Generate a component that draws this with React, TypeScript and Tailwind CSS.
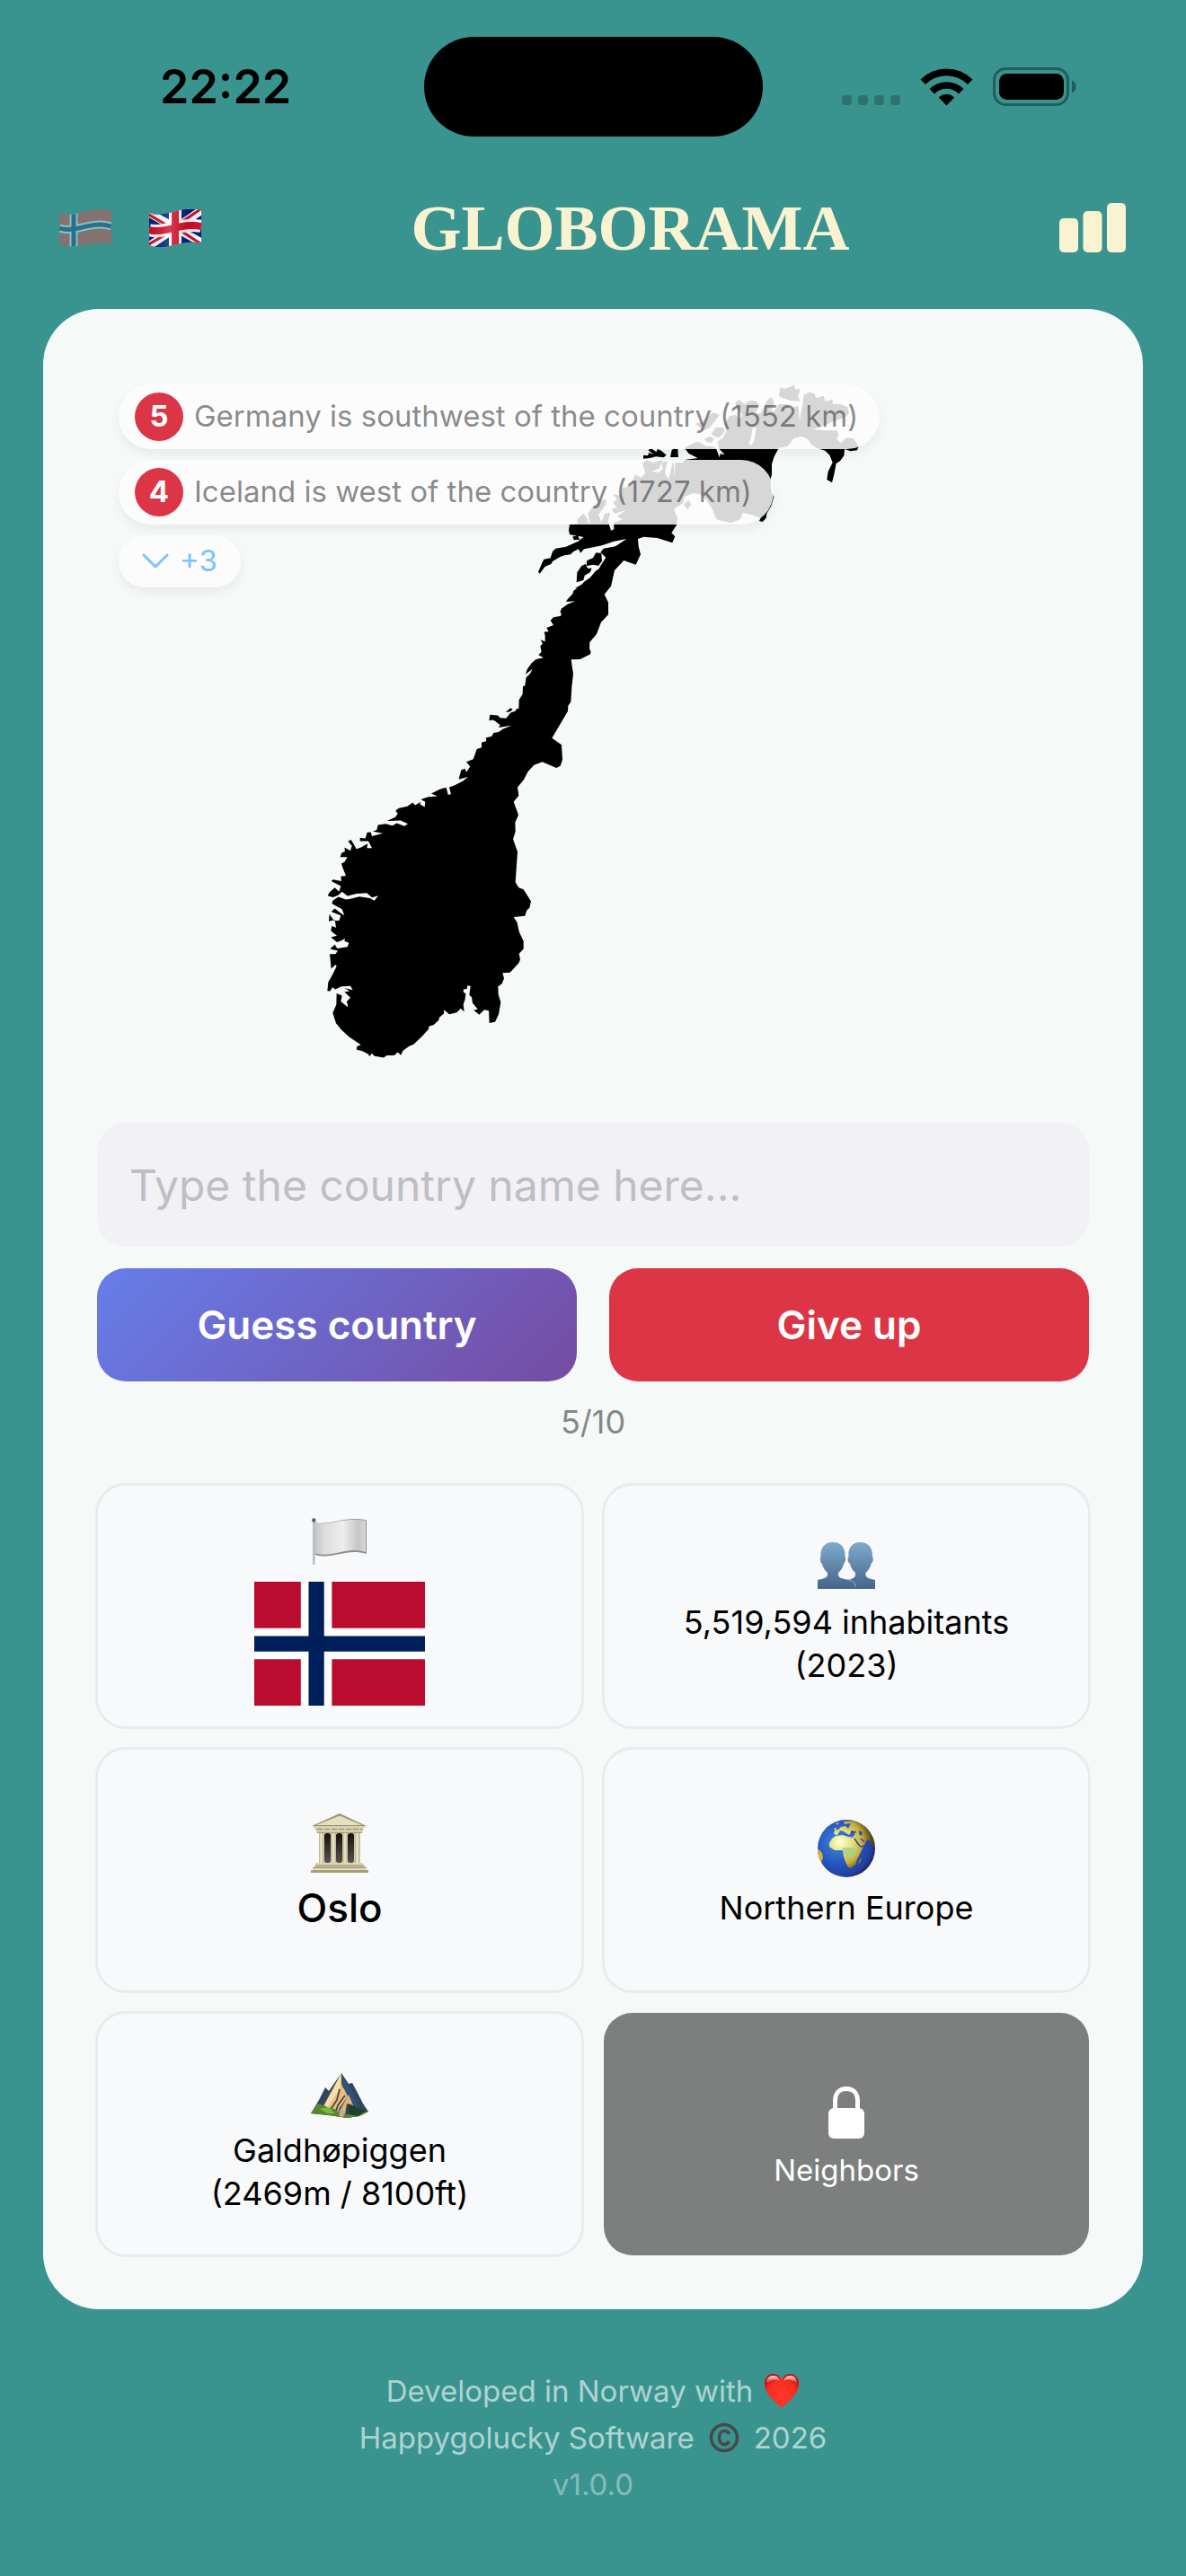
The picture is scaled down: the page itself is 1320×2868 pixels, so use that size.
import React from "react";

function NorwayShape() {
  return (
    <svg viewBox="364 428 592 750" className="mx-auto block h-[750px] w-[592px]" role="img" aria-label="Country outline">
      <g transform="translate(560 400) scale(0.33333)">
        <path d="M190 846 L193 836 215 818 240 808 210 810 216 800 232 784 236 772 250 764 268 760 264 752 272 742 290 730 308 708 320 700 325 690 343 662 325 645 335 632 375 625 412 600 370 608 330 622 290 630 270 634 258 647 252 634 235 642 225 652 205 655 190 660 165 675 160 684 140 692 122 716 117 710 130 680 136 668 158 664 165 642 175 632 210 626 250 608 268 594 250 590 256 602 236 604 232 592 246 590 222 585 219 570 222 552 248 550 247 535 268 515 280 530 285 550 290 545 283 515 300 492 322 470 345 468 342 485 318 520 328 542 340 515 358 512 350 540 360 572 370 568 370 545 400 535 380 525 410 505 372 515 362 500 380 495 366 478 380 470 368 450 390 455 398 430 418 425 432 410 440 385 460 395 475 380 465 350 478 336 500 345 535 336 520 365 495 375 520 378 532 366 530 345 548 340 540 380 552 402 560 370 566 345 570 345 570 400 575 345 600 345 610 335 650 330 620 315 606 297 625 285 650 275 680 290 700 290 712 300 722 328 725 316 740 318 722 300 715 275 735 262 745 240 740 215 755 190 775 185 790 200 800 185 780 165 775 145 790 135 805 150 825 138 845 140 855 155 845 175 830 185 860 180 880 140 895 125 905 145 895 170 905 175 920 150 945 150 960 165 985 155 990 205 1000 150 1003 120 1020 110 1040 115 1045 130 1070 122 1075 140 1100 135 1100 150 1125 150 1150 160 1155 180 1140 195 1110 205 1085 215 1060 225 1035 235 1085 238 1115 238 1120 255 1112 265 1128 280 1145 262 1170 265 1187 290 1182 304 1160 307 1140 300 1138 322 1125 340 1112 348 1105 385 1098 412 1081 402 1085 375 1100 345 1090 320 1075 305 1050 298 1030 285 1015 265 995 257 970 265 950 290 920 297 905 325 897 350 897 385 893 400 895 440 904 460 895 490 880 515 878 530 866 543 855 540 860 530 830 520 800 513 792 535 760 546 712 535 700 505 680 470 655 450 630 448 605 460 600 480 570 500 582 530 580 552 562 580 574 592 565 613 515 597 470 593 450 600 452 625 459 652 443 686 403 672 372 705 360 758 338 785 351 812 351 846Z" />
        <path d="M245 745 247 712 262 690 275 684 282 698 296 698 290 712 272 722 268 738ZM278 690 280 672 300 664 310 646 328 648 330 674 318 690 302 686ZM240 765 262 752 270 745 285 750 292 778 280 770Z" />
        <path d="M921 122 925 93 938 98 950 95 972 86 976 100 992 98 985 125 992 140 960 138 930 128ZM468 332 468 320 482 322 488 312 504 318 484 304 494 298 512 310 515 300 528 305 545 320 536 328 510 325 490 330ZM558 327 563 303 572 298 583 300 585 327ZM640 215 665 210 700 178 722 185 705 210 690 228 665 240 655 225ZM695 250 710 228 735 228 740 240 722 262 705 258ZM672 265 690 258 705 265 695 280 678 275ZM620 470 628 485 615 502 604 485Z" />
        <path fill="#f5f9f8" d="M832 230 846 228 838 270 830 287 820 282 828 262Z" />
      </g>
      <g transform="translate(340 640) scale(0.33333 0.35714)">
        <path d="M1011 85 1011 124 987 148 972 185 949 210 948 230 953 240 950 248 917 263 887 264 890 285 894 308 889 350 886 396 877 408 876 425 823 509 855 530 858 576 851 596 838 602 791 583 763 593 743 613 728 640 708 662 712 688 695 708 711 748 700 772 701 800 693 824 708 863 701 958 712 975 728 981 753 1018 748 1038 739 1046 733 1063 695 1067 707 1084 713 1112 728 1142 728 1166 713 1181 717 1200 712 1210 683 1240 658 1241 663 1258 656 1275 643 1283 644 1308 652 1332 645 1370 633 1394 614 1397 612 1359 597 1356 580 1371 562 1357 575 1354 558 1335 555 1317 547 1310 551 1282 541 1280 539 1291 527 1292 528 1302 535 1305 533 1322 527 1340 530 1362 518 1352 505 1364 480 1370 463 1356 462 1368 447 1380 445 1388 428 1403 412 1408 411 1416 390 1438 362 1463 345 1470 325 1484 319 1497 308 1488 296 1498 272 1498 261 1505 230 1500 222 1492 214 1501 209 1494 190 1485 170 1480 172 1470 185 1465 145 1440 120 1418 102 1398 91 1366 103 1340 104 1305 122 1312 118 1330 142 1348 138 1330 150 1318 130 1300 148 1298 130 1288 158 1294 150 1282 120 1283 100 1292 90 1286 82 1298 73 1297 76 1270 88 1250 104 1220 100 1215 86 1228 81 1182 100 1182 108 1172 82 1166 98 1152 106 1165 140 1160 145 1147 130 1142 132 1133 120 1140 105 1145 85 1130 105 1125 85 1110 88 1095 102 1100 98 1075 78 1080 80 1058 95 1078 112 1078 118 1062 86 1050 98 1040 114 1052 130 1062 122 1042 88 1025 92 1015 110 1004 135 1012 150 1010 180 1003 215 1008 230 1016 243 1000 222 1006 205 992 170 994 140 1001 122 988 110 998 92 1005 74 1000 80 990 98 975 112 988 118 970 86 955 92 950 120 955 118 940 135 938 125 915 120 900 130 895 140 880 116 880 120 868 132 862 130 850 150 860 155 845 142 830 152 826 160 838 170 855 185 850 208 838 205 852 222 852 210 830 182 830 182 820 200 822 206 803 218 802 222 815 258 806 225 800 238 795 242 780 268 776 290 782 305 774 330 783 342 776 318 766 272 767 300 755 308 745 301 735 312 727 340 722 358 710 366 718 385 708 382 715 398 724 400 708 385 700 410 692 440 690 420 682 450 668 470 663 476 685 486 684 480 662 500 655 525 643 542 630 512 638 515 625 520 608 533 604 537 615 550 598 537 583 560 575 565 562 572 543 588 538 588 523 604 518 602 508 622 503 628 493 645 490 660 480 688 470 645 476 650 468 632 455 625 452 613 454 616 436 642 438 650 446 670 447 685 430 700 425 708 415 712 420 713 390 725 372 726 348 733 345 737 320 750 308 758 293 735 310 740 295 755 275 770 263 795 258 778 250 788 240 784 222 792 215 785 202 800 208 800 190 797 178 812 177 805 165 828 157 818 142 828 132 853 128 855 105 868 97 897 87Z" />
        <path d="M668 428 685 415 692 420 682 427Z" />
      </g>
    </svg>
  );
}

function WaveFlagNorway() {
  return (
    <svg viewBox="0 0 58 42" className="block h-[42px] w-[58px] opacity-50" aria-hidden="true">
      <clipPath id="wave-no">
        <path d="M0 4 C18 11 34 -5 58 2 V39 C36 33 20 47 0 39Z" />
      </clipPath>
      <g clipPath="url(#wave-no)">
        <rect width="58" height="42" fill="#ce5052" />
        <path d="M16 0V42 M0 21 C18 27 36 12 58 19" fill="none" stroke="#cdf5ee" strokeWidth="9" />
        <path d="M16 0V42 M0 21 C18 27 36 12 58 19" fill="none" stroke="#1c4d8e" strokeWidth="5" />
      </g>
    </svg>
  );
}

function WaveFlagUK() {
  return (
    <svg viewBox="0 0 58 42" className="block h-[42px] w-[58px]" aria-hidden="true">
      <defs>
        <clipPath id="wave-uk">
          <path d="M0 4 C18 11 34 -5 58 1 V38 C36 32 20 48 0 40Z" />
        </clipPath>
        <linearGradient id="uk-shade">
          <stop offset="0" stopColor="#000" stopOpacity=".1" />
          <stop offset=".4" stopColor="#fff" stopOpacity=".18" />
          <stop offset=".75" stopColor="#000" stopOpacity=".12" />
          <stop offset="1" stopColor="#000" stopOpacity="0" />
        </linearGradient>
      </defs>
      <g clipPath="url(#wave-uk)">
        <rect width="58" height="42" fill="#00217d" />
        <path d="M-2 3 60 38 M-2 42 60 0" stroke="#fff" strokeWidth="9" />
        <path d="M-2 5 29 23 M29 20 60 40 M-2 40 29 22 M29 19 60 -2" stroke="#d80f2c" strokeWidth="3" />
        <path d="M29 0V42 M0 23 C18 28 36 14 58 19" fill="none" stroke="#fff" strokeWidth="14" />
        <path d="M29 0V42 M0 23 C18 28 36 14 58 19" fill="none" stroke="#d80f2c" strokeWidth="8" />
        <rect width="58" height="42" fill="url(#uk-shade)" />
      </g>
    </svg>
  );
}

function WhiteFlag() {
  return (
    <svg viewBox="-1 -3 64 64" className="h-16 w-16" aria-hidden="true">
      <defs>
        <linearGradient id="white-flag">
          <stop offset="0" stopColor="#c6c6c6" />
          <stop offset=".2" stopColor="#dedede" />
          <stop offset=".55" stopColor="#eeeeee" />
          <stop offset=".85" stopColor="#c6c6c6" />
          <stop offset="1" stopColor="#d8d8d8" />
        </linearGradient>
      </defs>
      <path d="M3.500 5 C22 9 36 -3 61 2.500 V40 C38 33 24 47 3.500 41Z" fill="#8d8d8d" />
      <path d="M4 5.500 C22 9 36 -2 60 3 V38 C38 31 24 45 4 39.500Z" fill="url(#white-flag)" />
      <rect x="1" y="3" width="2.500" height="49" fill="#b4bfc7" />
      <circle cx="2.300" cy="2.600" r="2.300" fill="#59646d" />
    </svg>
  );
}

function NorwayFlag() {
  return (
    <svg viewBox="0 0 22 16" preserveAspectRatio="none" className="h-[138px] w-[190px]" role="img" aria-label="Flag">
      <rect width="22" height="16" fill="#ba0c2f" />
      <path d="M8 0V16M0 8H22" stroke="#fff" strokeWidth="4" />
      <path d="M8 0V16M0 8H22" stroke="#00205b" strokeWidth="2" />
    </svg>
  );
}

function People() {
  return (
    <svg viewBox="0 -9 64 64" className="h-16 w-16" aria-hidden="true">
      <defs>
        <linearGradient id="people" x1="0" y1="0" x2="0" y2="52" gradientUnits="userSpaceOnUse">
          <stop offset="0" stopColor="#7faacb" />
          <stop offset="1" stopColor="#44658b" />
        </linearGradient>
      </defs>
      <g fill="url(#people)">
        <path d="M34 52V42C38 41 41 40 42 37V34C39 31 37 29 36 24C33 22 33 18 34.500 16C33.500 6 39 0 47.500 0S61.500 6 61 16C62.500 18 62 22 59.500 24C58.500 29 56.500 31 53.500 34V37C54.500 40 59 41 64 42V52Z" />
        <path d="M0 52V42C5 41 10 40 11 37V34C8 31 6 29 5 24C2.500 22 2.500 18 3.500 16C3 6 8 0 17 0S31 6 30.500 16C31.500 18 31.500 22 29 24C28 29 26 31 23 34V37C24 40 29 41 35 42C40 43 42 46 42 52Z" />
      </g>
      <path d="M31 41.500C38 42 42 44 42 50" stroke="#8fb5d0" strokeWidth="1" fill="none" />
    </svg>
  );
}

function Museum() {
  return (
    <svg viewBox="0 0 64 66" className="h-[66px] w-16" aria-hidden="true">
      <defs>
        <linearGradient id="column">
          <stop offset="0" stopColor="#b5ae8b" />
          <stop offset=".5" stopColor="#f1ecd2" />
          <stop offset="1" stopColor="#b9b28f" />
        </linearGradient>
        <linearGradient id="doorway" x1="0" y1="0" x2="0" y2="1">
          <stop offset="0" stopColor="#15110c" />
          <stop offset="1" stopColor="#59524f" />
        </linearGradient>
      </defs>
      <rect x="9" y="20" width="46" height="36" fill="#cfc8a8" />
      <g fill="url(#doorway)">
        <rect x="15" y="22" width="7" height="33" rx="3" />
        <rect x="28" y="22" width="7" height="33" rx="3" />
        <rect x="41" y="22" width="7" height="33" rx="3" />
      </g>
      <g fill="url(#column)">
        <rect x="9" y="22" width="5" height="33" />
        <rect x="22.500" y="22" width="5" height="33" />
        <rect x="35.500" y="22" width="5" height="33" />
        <rect x="49" y="22" width="5" height="33" />
      </g>
      <path d="M1 14 32 0 62 14Z" fill="#9b946d" />
      <path d="M6 13 32 2.500 57 13Z" fill="#e6e0c3" />
      <path d="M2 14H61L59 16H3Z" fill="#d8d1b0" />
      <path d="M4 16H59L57 22H7Z" fill="#d6cfae" />
      <path d="M7 17.500H57" stroke="#8f8862" strokeWidth="1" strokeDasharray="6 2" />
      <path d="M7 21.500H57" stroke="#a29a74" strokeWidth="1" />
      <rect x="5" y="55" width="53" height="3" fill="#ddd6b5" />
      <rect x="4" y="58" width="56" height="3" fill="#c9c29e" />
      <rect x="2" y="60.500" width="60" height="2.500" fill="#e4ddbd" />
      <rect x="0" y="63" width="64" height="3" fill="#a69f78" />
      <path d="M5 58H59M2 60.500H62" stroke="#877f5a" strokeWidth=".8" />
    </svg>
  );
}

function Globe() {
  return (
    <svg viewBox="0 0 64 64" className="h-16 w-16" aria-hidden="true">
      <defs>
        <radialGradient id="sea" cx=".35" cy=".4" r=".7">
          <stop offset="0" stopColor="#3f8ed8" />
          <stop offset=".5" stopColor="#2757c4" />
          <stop offset=".85" stopColor="#223f9e" />
          <stop offset="1" stopColor="#1c1c4e" />
        </radialGradient>
        <radialGradient id="land" cx="25" cy="25" r="36" gradientUnits="userSpaceOnUse">
          <stop offset="0" stopColor="#ffffd8" />
          <stop offset=".4" stopColor="#e4dc74" />
          <stop offset=".7" stopColor="#c6a83c" />
          <stop offset="1" stopColor="#4c4413" />
        </radialGradient>
        <clipPath id="globe-clip">
          <circle cx="32" cy="32" r="32" />
        </clipPath>
      </defs>
      <circle cx="32" cy="32" r="32" fill="url(#sea)" />
      <g clipPath="url(#globe-clip)">
        <path fill="url(#land)" d="M16 21 20 18 28 17 34 19 41 20 44 27 48 31 51 30 47 38 44 44 42 50 37 54 34 53 31 47 29 41 28 34 19 34 13 30 13 26Z" />
        <path fill="#a6cf83" d="M27 31 40 31 44 35 40 42 32 42 28 35Z" opacity=".8" />
        <path fill="url(#land)" d="M18 16 19 12 23 11 26 8 31 7 34 10 37 4 30 5 29 2 44 1 56 10 64 24 62 32 59 24 55 22 52 28 47 30 42 22 39 19 42 16 37 14 35 17 29 13 25 12 22 17Z" />
        <path fill="#2c50af" d="M37 12 43 13 42 15 37 15ZM46 12 50 14 49 18 46 16Z" />
        <path d="M41 21 46 28 49 30M48 21 52 25" stroke="#2d4d9b" strokeWidth="1.500" fill="none" />
        <path fill="url(#land)" d="M47 44 49 43 47 49 45 48Z" />
        <path fill="#dcb52f" d="M0 32 5 37 6 42 3 50 0 46Z" />
        <path fill="url(#land)" d="M18 10 21 9 20 13ZM20 4 24 3 22 6Z" />
      </g>
    </svg>
  );
}

function Mountain() {
  return (
    <svg viewBox="0 -12 64 64" className="h-16 w-16" aria-hidden="true">
      <path d="M0 45 9 30 16 16 20 20 34 0 42 12 46 11 52 22 58 34 64 43 54 48 40 50 20 47Z" fill="#31475d" />
      <path d="M14 37 24 18 34 0 34 12 39 22 34 30 30 45 15 46Z" fill="#e5c088" />
      <path d="M24 20 34 0 32 18 24 30 18 40 13 39Z" fill="#f8e0a4" />
      <path d="M34 2 46 20 53 39 42 33 39 22 35 15Z" fill="#315278" />
      <path d="M36 16 41 26 31 40 34 28Z" fill="#f0bd80" />
      <path d="M32 18 29 30 21 42M38 25 30 36 27 46" stroke="#4b463d" strokeWidth="1.800" fill="none" />
      <path d="M42 24 47 36 40 34 38 46 31 44Z" fill="#dfb57d" />
      <path d="M0 45 7 34 15 36 20 39 27 40 33 46 44 46 54 40 64 43 54 48 40 50 20 47Z" fill="#59872d" />
      <path d="M10 40 20 38 27 45 18 45Z" fill="#78bb3a" />
      <path d="M42 34 52 39 62 42 52 48 42 46Z" fill="#203f31" />
      <path d="M33 40 38 42 36 49 31 48Z" fill="#c9a98a" />
    </svg>
  );
}

function Lock() {
  return (
    <svg viewBox="0 0 40 58" className="h-[58px] w-10" aria-hidden="true">
      <path d="M7.500 28V16C7.500 7 13 2.500 20 2.500S32.500 7 32.500 16V28" fill="none" stroke="#fff" strokeWidth="5" />
      <rect y="24" width="40" height="34" rx="6" fill="#fff" />
    </svg>
  );
}

function Heart() {
  return (
    <svg viewBox="0 0 40 38" className="h-[38px] w-10" role="img" aria-label="love">
      <defs>
        <radialGradient id="heart" cx=".5" cy=".62" r=".62">
          <stop offset="0" stopColor="#ff3a2c" />
          <stop offset=".7" stopColor="#f92b20" />
          <stop offset="1" stopColor="#c00d0c" />
        </radialGradient>
        <linearGradient id="gloss" x1="0" y1="0" x2="0" y2="1">
          <stop offset="0" stopColor="#fff" stopOpacity=".85" />
          <stop offset="1" stopColor="#fff" stopOpacity="0" />
        </linearGradient>
      </defs>
      <path d="M20 38C13 31 1 23 1 11C1 4 5 0 10.500 0C15 0 18 2 20 6C22 2 25 0 29.500 0C35 0 39 4 39 11C39 23 27 31 20 38Z" fill="url(#heart)" />
      <path d="M3 11C3 4 6 2 11 2C15 2 17 5 18 8C12 5 7 7 3 11ZM37 11C37 4 34 2 29 2C25 2 23 5 22 8C28 5 33 7 37 11Z" fill="url(#gloss)" />
    </svg>
  );
}

function CopyrightMark() {
  return (
    <svg viewBox="0 0 34 34" className="h-[34px] w-[34px]" role="img" aria-label="copyright">
      <circle cx="17" cy="17" r="14.500" fill="none" stroke="#48484a" strokeWidth="3.600" />
      <path d="M22.500 13C21.500 10.500 19.500 9.500 17.300 9.500C13.600 9.500 11.500 12.500 11.500 17S13.600 24.500 17.300 24.500C19.500 24.500 21.500 23.500 22.500 21" fill="none" stroke="#48484a" strokeWidth="3.400" />
    </svg>
  );
}

function StatusIcons() {
  return (
    <svg viewBox="0 0 262 44" className="h-11 w-[262px]" aria-hidden="true">
      <g fill="#2b736f">
        <rect x="0" y="31" width="11" height="11" rx="4" />
        <rect x="18" y="31" width="11" height="11" rx="4" />
        <rect x="36" y="31" width="11" height="11" rx="4" />
        <rect x="54" y="31" width="11" height="11" rx="4" />
      </g>
      <path d="M87.500 13.500A41 41 0 0 1 145.500 13.500L140 19A33 33 0 0 0 93 19ZM97.500 24A27 27 0 0 1 135.500 24L130 29.500A19 19 0 0 0 103 29.500ZM107.700 33.500A13 13 0 0 1 125.300 33.500L116.500 42.500Z" />
      <rect x="169.500" y="1.500" width="82" height="40" rx="13" fill="none" stroke="#215d5a" strokeWidth="3" />
      <rect x="175" y="7" width="72" height="29" rx="8.500" />
      <path d="M256 14.500C262 16.500 262 26.500 256 28.500Z" fill="#215d5a" />
    </svg>
  );
}

function Guess({ n, text }: { n: number; text: string }) {
  return (
    <li className="flex h-[72px] items-center gap-3 rounded-full bg-[#fdfdfd]/85 pl-[18px] pr-6 shadow-[0_6px_12px_rgba(0,0,0,0.06)]">
      <span className="flex h-[54px] w-[54px] items-center justify-center rounded-full bg-[#dc3545] text-[33px] font-bold text-white">{n}</span>
      <span className="whitespace-nowrap text-[33px] text-[#3c3c43]/60">{text}</span>
    </li>
  );
}

function Hint({ icon, children }: { icon: React.ReactNode; children: React.ReactNode }) {
  return (
    <div className="flex h-[270px] flex-col items-center justify-center rounded-[32px] bg-[#f8f9fb] text-center text-4xl leading-[48px] outline-3 -outline-offset-1 outline-[#e9ecef]">
      <div className="flex h-[84px] items-center">{icon}</div>
      {children}
    </div>
  );
}

export default function App() {
  return (
    <div className="flex min-h-screen flex-col bg-[#399490] px-12 pb-16 font-['Inter',sans-serif] text-black">
      <div className="grid grid-cols-[1fr_377px_1fr] items-center pt-[41px]">
        <div className="pl-[130px] text-[52px] leading-[60px] font-semibold">22:22</div>
        <div className="h-[111px] rounded-full bg-black" />
        <div className="flex justify-end pr-[73px]">
          <StatusIcons />
        </div>
      </div>

      <header className="mt-[66px] flex h-[72px] items-center justify-between px-[18px]">
        <div className="flex gap-[42px]">
          <button type="button" aria-label="Norsk">
            <WaveFlagNorway />
          </button>
          <button type="button" aria-label="English">
            <WaveFlagUK />
          </button>
        </div>
        <h1 className="font-['Liberation_Serif',serif] text-[72px] leading-[72px] font-bold text-[#faf3d1]">GLOBORAMA</h1>
        <button type="button" aria-label="Statistics">
          <svg viewBox="0 0 75 56" className="block h-14 w-[75px]" fill="#faf3d1" aria-hidden="true">
            <rect x="0" y="17" width="21" height="38" rx="5" />
            <rect x="26.500" y="9" width="21" height="46" rx="5" />
            <rect x="53" y="0" width="21" height="55" rx="5" />
          </svg>
        </button>
      </header>

      <main className="mt-[54px] rounded-[62px] bg-[#f5f9f8] p-[60px]">
        <section className="relative py-6">
          <NorwayShape />
          <ul className="absolute top-6 left-6 flex flex-col items-start gap-3">
            <Guess n={5} text="Germany is southwest of the country (1552 km)" />
            <Guess n={4} text="Iceland is west of the country (1727 km)" />
            <li>
              <button type="button" className="flex h-[58px] items-center gap-3 rounded-full bg-[#fdfdfd]/85 px-[26px] text-[33px] text-[#7fc1ff] shadow-[0_6px_12px_rgba(0,0,0,0.06)]">
                <svg viewBox="0 0 30 18" className="h-[18px] w-[30px]" fill="none" stroke="currentColor" strokeWidth="3" strokeLinecap="round" strokeLinejoin="round" aria-hidden="true">
                  <path d="M2 2 15 15 28 2" />
                </svg>
                +3
              </button>
            </li>
          </ul>
        </section>

        <form className="mt-12" onSubmit={(e) => e.preventDefault()}>
          <input
            type="text"
            aria-label="Country name"
            placeholder="Type the country name here..."
            className="block h-[138px] w-full rounded-[32px] bg-[#f2f1f6] px-9 text-5xl placeholder:text-[#bfbec3]"
          />
          <div className="mt-6 grid grid-cols-2 gap-9 text-[44px] font-semibold text-white">
            <button type="submit" className="h-[126px] rounded-[32px] bg-linear-[135deg,#667eea,#764ba2]">
              Guess country
            </button>
            <button type="button" className="h-[126px] rounded-[32px] bg-[#dc3545]">
              Give up
            </button>
          </div>
        </form>

        <p className="mt-[21px] text-center text-4xl leading-[48px] text-[#858887]">5/10</p>

        <section className="mt-[46px] grid grid-cols-2 gap-6">
          <Hint icon={<WhiteFlag />}>
            <NorwayFlag />
          </Hint>
          <Hint icon={<People />}>
            <p>
              5,519,594 inhabitants
              <br />
              (2023)
            </p>
          </Hint>
          <Hint icon={<Museum />}>
            <p className="text-[44px] leading-[60px] font-medium">Oslo</p>
          </Hint>
          <Hint icon={<Globe />}>
            <p>Northern Europe</p>
          </Hint>
          <Hint icon={<Mountain />}>
            <p>
              Galdhøpiggen
              <br />
              (2469m / 8100ft)
            </p>
          </Hint>
          <button type="button" className="flex h-[270px] flex-col items-center justify-center rounded-[32px] bg-[#7d7f7e] text-[33px] leading-[48px] text-white">
            <span className="flex h-20 items-center">
              <Lock />
            </span>
            Neighbors
          </button>
        </section>
      </main>

      <footer className="mt-[65px] text-center text-[33px] leading-[52px] text-white/60">
        <p className="flex items-center justify-center gap-3">
          Developed in Norway with
          <Heart />
        </p>
        <p className="flex items-center justify-center gap-4">
          Happygolucky Software
          <CopyrightMark />
          <span>2026</span>
        </p>
        <p className="text-white/40">v1.0.0</p>
      </footer>
    </div>
  );
}
